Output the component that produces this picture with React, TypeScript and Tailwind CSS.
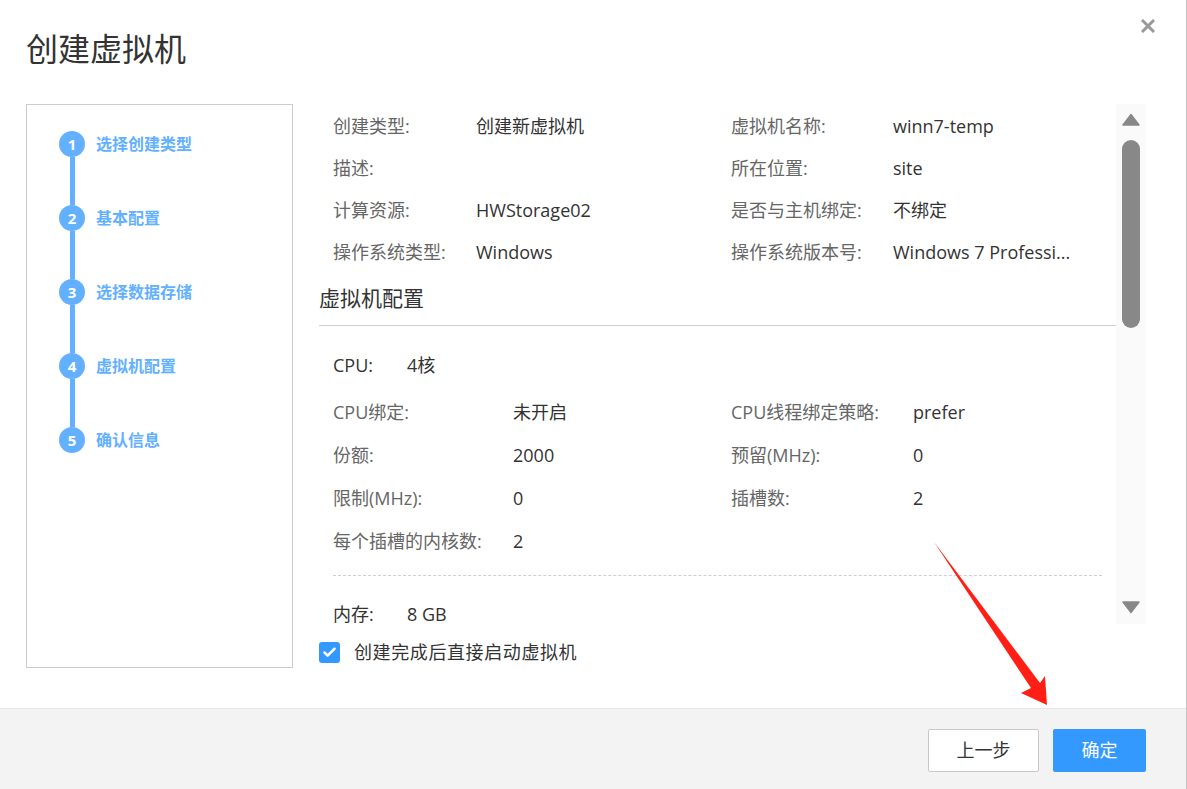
import { Check } from "lucide-react";

const steps = ["选择创建类型", "基本配置", "选择数据存储", "虚拟机配置", "确认信息"];

const basicInfo: [string, string, string, string][] = [
  ["创建类型:", "创建新虚拟机", "虚拟机名称:", "winn7-temp"],
  ["描述:", "", "所在位置:", "site"],
  ["计算资源:", "HWStorage02", "是否与主机绑定:", "不绑定"],
  ["操作系统类型:", "Windows", "操作系统版本号:", "Windows 7 Professi..."],
];

const cpuInfo: [string, string, string, string][] = [
  ["CPU绑定:", "未开启", "CPU线程绑定策略:", "prefer"],
  ["份额:", "2000", "预留(MHz):", "0"],
  ["限制(MHz):", "0", "插槽数:", "2"],
  ["每个插槽的内核数:", "2", "", ""],
];

function StepList() {
  return (
    <div className="w-[267px] h-[564px] border border-[#cccccc] pt-[26px] pl-[32px]">
      {steps.map((label, i) => (
        <div key={label} className="flex items-start">
          <div className="flex w-[26px] flex-col items-center">
            <div className="flex h-[26px] w-[26px] items-center justify-center rounded-full bg-[#62b0ff] text-[15px] font-bold text-white">
              {i + 1}
            </div>
            {i < steps.length - 1 && <div className="h-[48px] w-[5px] bg-[#62b0ff]" />}
          </div>
          <div className="ml-[11px] flex h-[26px] items-center text-[16px] font-bold text-[#62b0ff]">
            {label}
          </div>
        </div>
      ))}
    </div>
  );
}

function Scrollbar() {
  return (
    <div className="flex w-[30px] flex-col items-center bg-[#fafafa] pt-[9px]">
      <svg width="18" height="13" viewBox="0 0 18 13">
        <path d="M9 1.5 L17 12 L1 12 Z" fill="#888888" stroke="#888888" strokeWidth="1.5" strokeLinejoin="round" />
      </svg>
      <div className="mt-[14px] h-[188px] w-[18px] rounded-full bg-[#888888]" />
      <div className="flex-1" />
      <svg width="18" height="13" viewBox="0 0 18 13" className="mb-[10px]">
        <path d="M1 1 L17 1 L9 11.5 Z" fill="#888888" stroke="#888888" strokeWidth="1.5" strokeLinejoin="round" />
      </svg>
    </div>
  );
}

export default function App() {
  return (
    <div
      className="relative h-[789px] w-[1187px] overflow-hidden border-r border-[#c4c4c4] bg-white text-[18px] text-[#333333]"
      style={{ fontFamily: '"Open Sans", "Noto Sans CJK SC", sans-serif' }}
    >
      {/* header */}
      <div className="h-[104px] pl-[26px] pt-[27px]">
        <h1 className="text-[32px] leading-[44px] font-normal text-[#333333]">创建虚拟机</h1>
      </div>
      <button className="absolute left-[1141px] top-[19px] h-[14px] w-[14px]">
        <svg width="14" height="14" viewBox="0 0 14 14">
          <path d="M2 2 L12 12 M12 2 L2 12" stroke="#999999" strokeWidth="3" strokeLinecap="square" />
        </svg>
      </button>

      {/* body */}
      <div className="flex h-[604px] pl-[26px] pr-[40px]">
        <StepList />
        <div className="ml-[26px] flex-1">
          <div className="flex h-[520px]">
            <div className="flex-1 overflow-hidden">
              <div className="px-[14px] pt-[1px]">
                {basicInfo.map((row, i) => (
                  <div key={i} className="grid h-[42px] grid-cols-[143px_255px_162px_1fr] items-center">
                    <span className="text-[#666666]">{row[0]}</span>
                    <span>{row[1]}</span>
                    <span className="text-[#666666]">{row[2]}</span>
                    <span className="whitespace-nowrap">{row[3]}</span>
                  </div>
                ))}
              </div>
              <div className="flex h-[53px] items-center border-b border-[#cfcfcf] text-[21px] text-[#333333]">
                虚拟机配置
              </div>
              <div className="px-[14px]">
                <div className="flex h-[65px] pt-[27px] leading-[24px]">
                  <span className="w-[74px]">CPU:</span>
                  <span>4核</span>
                </div>
                {cpuInfo.map((row, i) => (
                  <div key={i} className="grid h-[43px] grid-cols-[180px_218px_182px_1fr] items-center">
                    <span className="text-[#666666]">{row[0]}</span>
                    <span>{row[1]}</span>
                    <span className="text-[#666666]">{row[2]}</span>
                    <span>{row[3]}</span>
                  </div>
                ))}
                <div className="mt-[12px] border-t border-dashed border-[#cfcfcf]" />
                <div className="flex h-[76px] items-center">
                  <span className="w-[74px]">内存:</span>
                  <span>8 GB</span>
                </div>
              </div>
            </div>
            <Scrollbar />
          </div>
          <label className="flex h-[56px] items-center">
            <span className="flex h-[21px] w-[21px] items-center justify-center rounded-[3px] bg-[#3399ff]">
              <Check className="h-[15px] w-[15px] text-white" strokeWidth={4} />
            </span>
            <span className="ml-[14px] tracking-[0.6px]">创建完成后直接启动虚拟机</span>
          </label>
        </div>
      </div>

      {/* footer */}
      <div className="flex h-[81px] items-start justify-end gap-[14px] border-t border-[#e6e6e6] bg-[#f3f3f3] pr-[40px] pt-[20px]">
        <button className="h-[43px] w-[111px] rounded-[2px] border border-[#c9c9c9] bg-white text-[18px] text-[#333333]">
          上一步
        </button>
        <button className="h-[43px] w-[93px] rounded-[2px] bg-[#3399ff] text-[18px] text-white">确定</button>
      </div>

      {/* annotation arrow */}
      <svg className="pointer-events-none absolute left-0 top-0" width="1187" height="789">
        <polygon
          points="934,542 1040,683 1045,676 1047,705 1021,693 1031,688"
          fill="#ff1f14"
        />
      </svg>
    </div>
  );
}
